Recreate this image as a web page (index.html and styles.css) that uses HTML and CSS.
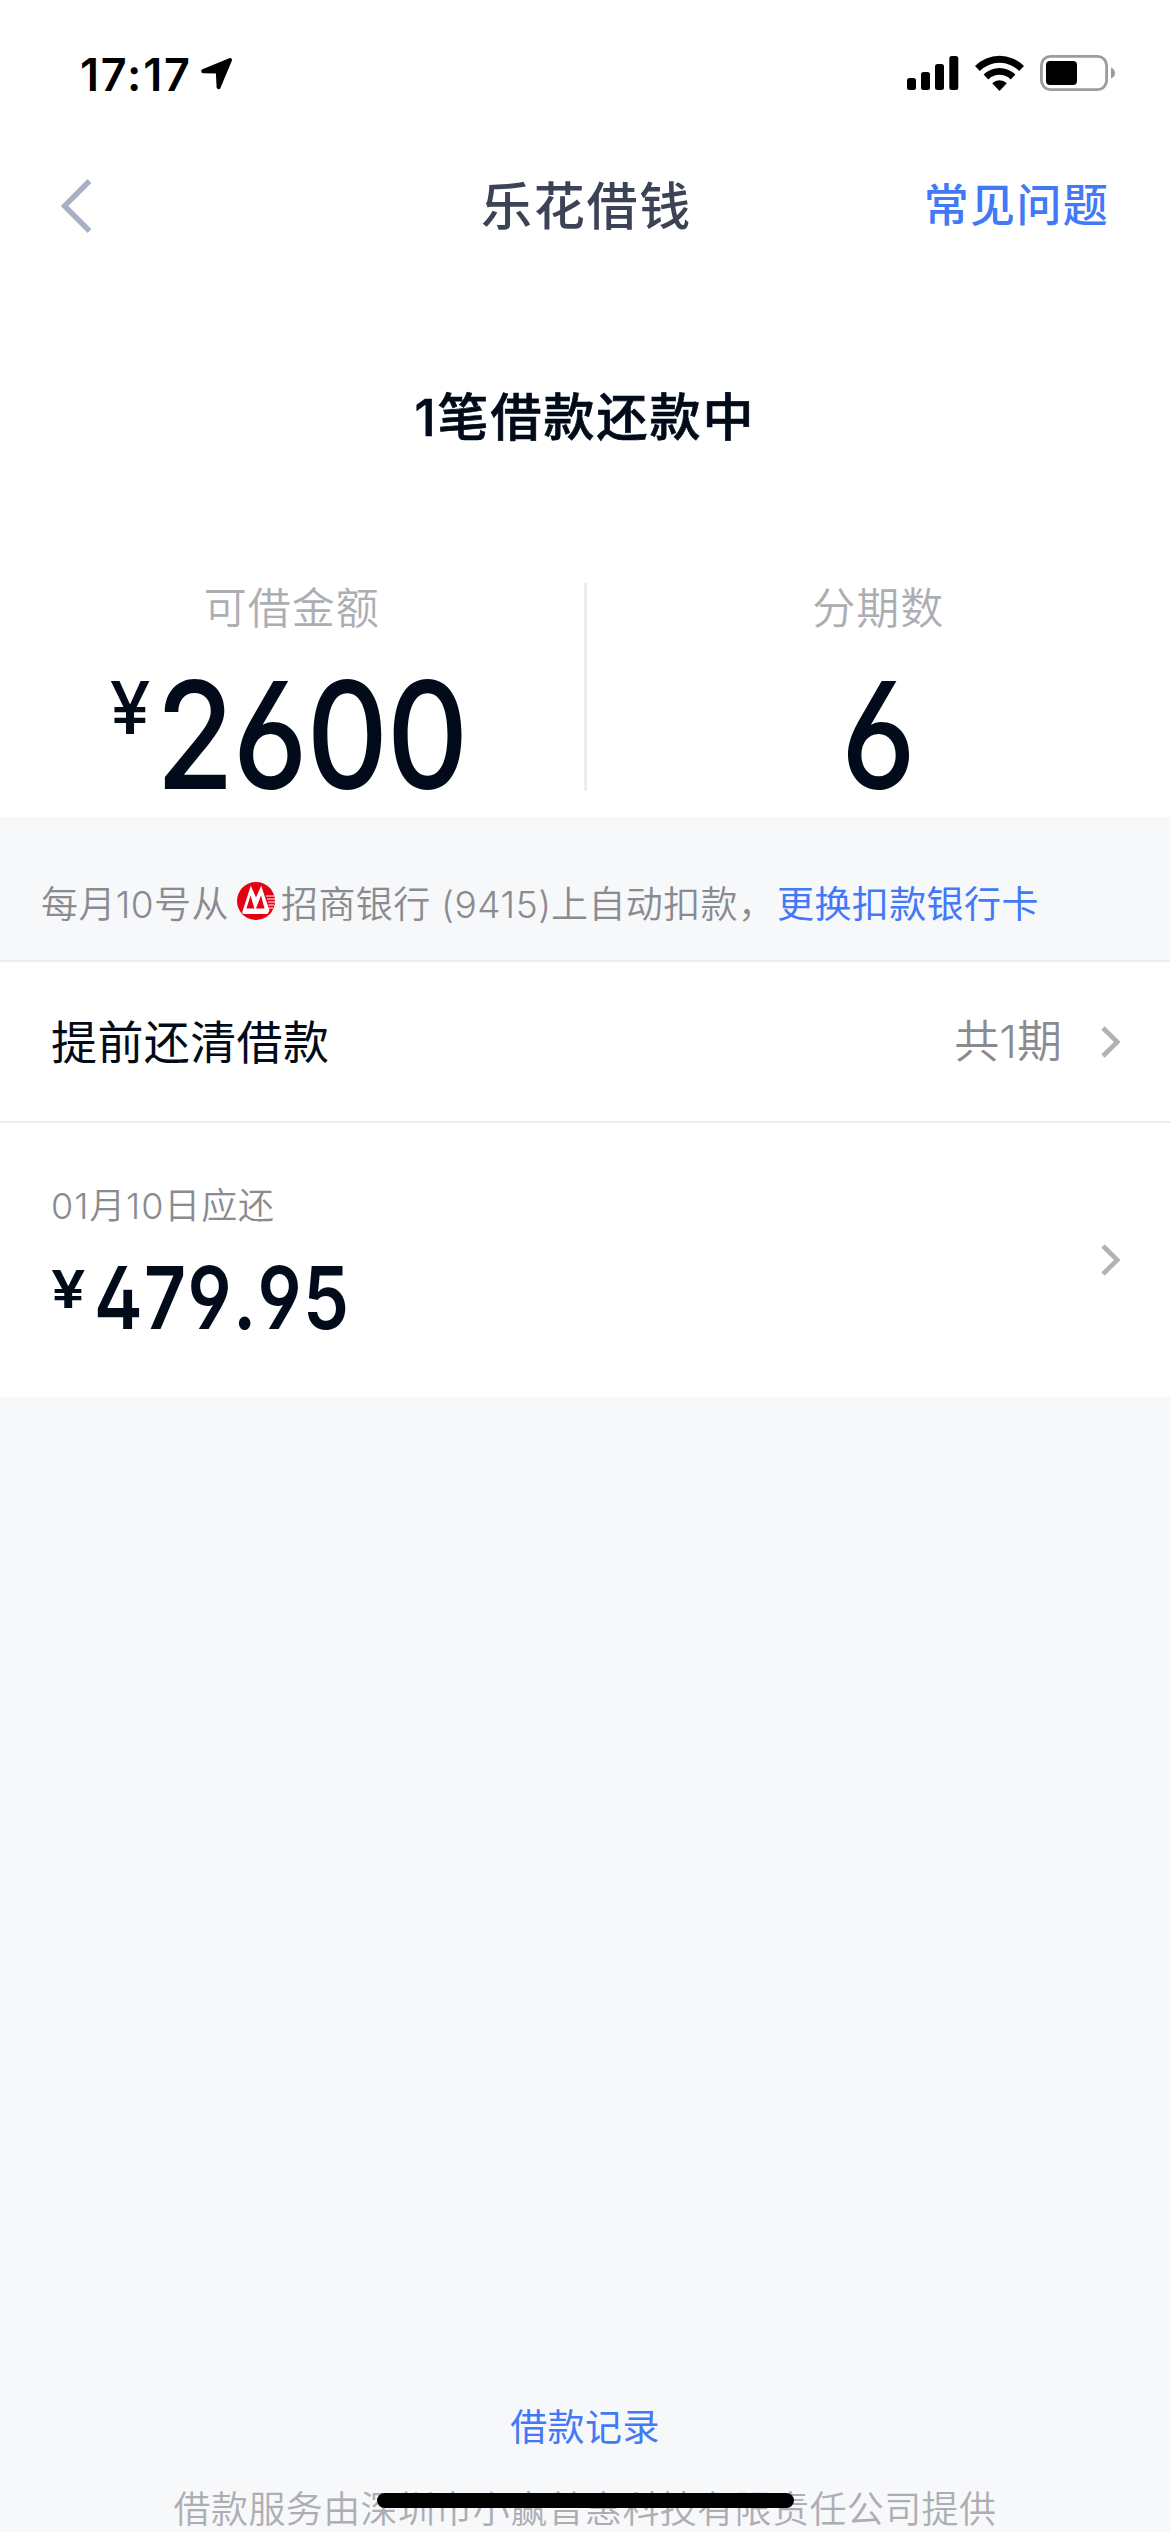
FILE: index.html
```html
<!DOCTYPE html>
<html lang="zh-CN">
<head>
<meta charset="utf-8">
<title>乐花借钱</title>
<link rel="stylesheet" href="styles.css">
</head>
<body>
<div class="page">
  <header class="status">
    <div class="status-left">
      <span class="time">17:17</span>
      <svg class="locate" width="34" height="34" viewBox="0 0 34 34"><path d="M3.2 14.2 30 3 18.6 30.2 17.8 14.6Z" stroke="#000" stroke-width="4" stroke-linejoin="round"/></svg>
    </div>
    <div class="status-right">
      <svg width="52" height="36" viewBox="0 0 52 36"><rect x="0" y="23" width="9" height="12" rx="2.5"/><rect x="14" y="17" width="9" height="18" rx="2.5"/><rect x="28" y="9" width="9" height="26" rx="2.5"/><rect x="42.3" y="1" width="9" height="34" rx="2.5"/></svg>
      <svg width="49" height="36" viewBox="0 0 49 36"><path d="M0 11A34.5 34.5 0 0 1 49 11L44.2 16A27.8 27.8 0 0 0 4.8 16Z"/><path d="M8.6 19.5A22.6 22.6 0 0 1 40.4 19.5L35.7 24.5A15.8 15.8 0 0 0 13.3 24.5Z"/><path d="M17.2 28.3A10.5 10.5 0 0 1 31.8 28.3L24.5 36Z"/></svg>
      <svg width="76" height="37" viewBox="0 0 76 37"><rect x="1.4" y="1.4" width="65.2" height="33.2" rx="9" fill="none" stroke="#9c9c9c" stroke-width="2.8"/><rect x="6" y="6" width="31" height="24" rx="4"/><path d="M71 12.5Q75 14 75 18T71 23.500Z" fill="#9c9c9c"/></svg>
    </div>
  </header>

  <nav class="nav">
    <svg class="back" width="32" height="54" viewBox="0 0 32 54"><path d="M28.500 2 3.500 27 28.500 52" fill="none" stroke="#a8b0c3" stroke-width="5.400"/></svg>
    <h1 class="title">乐花借钱</h1>
    <a class="faq">常见问题</a>
  </nav>

  <h2 class="headline">1笔借款还款中</h2>

  <section class="summary">
    <div class="stat">
      <div class="stat-label">可借金额</div>
      <div class="stat-value"><span class="yen">¥</span><span class="din">2600</span></div>
    </div>
    <div class="rule"></div>
    <div class="stat">
      <div class="stat-label">分期数</div>
      <div class="stat-value single"><span class="din">6</span></div>
    </div>
  </section>

  <section class="notice">
    <span class="notice-day">每月10号从</span>
    <svg class="bank" width="38" height="38" viewBox="0 0 38 38"><circle cx="19" cy="19" r="19" fill="#e50012"/><path d="M5 31 13.800 3.800 19 15.500 24.200 3.800 32.500 28.500 30.500 32H7ZM9.400 26.500H17.400L13.600 13.500ZM19 26.500H27.500L24 13.500Z" fill="#fff" fill-rule="evenodd"/><path d="M29 14H37M30 17H38M31 20H38M31.500 23H37M32 26H36" stroke="#fff" stroke-width="1"/></svg>
    <span class="notice-bank">招商银行</span>
    <span class="notice-num">(9415)</span>
    <span class="notice-tail">上自动扣款，</span>
    <a class="link">更换扣款银行卡</a>
  </section>

  <section class="row payoff">
    <span class="row-title">提前还清借款</span>
    <span class="row-count">共1期</span>
    <svg class="chev" width="20" height="32" viewBox="0 0 20 32"><path d="M2 2 16.300 16 2 30" fill="none" stroke="#b1b2b6" stroke-width="4.600"/></svg>
  </section>

  <section class="row due">
    <div class="due-main">
      <div class="due-date">01月10日应还</div>
      <div class="due-amount"><span class="due-yen">¥</span><span class="due-num">479.95</span></div>
    </div>
    <svg class="chev" width="20" height="32" viewBox="0 0 20 32"><path d="M2 2 16.300 16 2 30" fill="none" stroke="#b1b2b6" stroke-width="4.600"/></svg>
  </section>

  <footer class="footer">
    <a class="records">借款记录</a>
    <p class="provider">借款服务由深圳市小赢普惠科技有限责任公司提供</p>
  </footer>
  <div class="home-bar"></div>
</div>
</body>
</html>
```
FILE: styles.css
```css
* { box-sizing: border-box; margin: 0; padding: 0; }
body {
  width: 1170px;
  height: 2532px;
  overflow: hidden;
  background: #f7f8fa;
  color: #020b1a;
  font-family: "Inter", "Noto Sans CJK SC", sans-serif;
}
.page {
  position: relative;
  width: 1170px;
  height: 2532px;
  overflow: hidden;
  display: flex;
  flex-direction: column;
}
svg { display: block; flex: none; }
a, span { white-space: nowrap; }

.status {
  height: 150px;
  padding: 55px 54px 0 80px;
  background: #fff;
  color: #000;
  display: flex;
  justify-content: space-between;
  align-items: flex-start;
}
.status-left { display: flex; gap: 11px; }
.time {
  width: 109px;
  font-size: 45px;
  line-height: 40px;
  font-weight: 600;
  letter-spacing: 1.8px;
}
.locate { margin-top: 2px; }
.status-right { display: flex; gap: 16px; }

.nav {
  height: 111px;
  padding: 0 61px 0 61px;
  background: #fff;
  display: grid;
  grid-template-columns: 1fr auto 1fr;
  align-items: center;
}
.title {
  margin-top: 2px;
  padding-left: 3px;
  font-size: 51px;
  line-height: 72px;
  font-weight: 500;
  letter-spacing: 1.8px;
  color: #3c4354;
}
.faq {
  justify-self: end;
  font-size: 45px;
  line-height: 64px;
  font-weight: 500;
  letter-spacing: 1.3px;
  color: #4279f6;
}

.headline {
  height: 322px;
  padding-top: 121px;
  background: #fff;
  text-align: center;
  font-size: 51px;
  line-height: 72px;
  font-weight: 500;
  letter-spacing: 2px;
  -webkit-text-stroke: 0.7px #020b1a;
}

.summary {
  height: 234px;
  background: #fff;
  display: flex;
}
.rule { width: 3px; height: 208px; background: #ecedef; }
.stat { flex: 1; display: flex; flex-direction: column; align-items: center; }
.stat-label {
  font-size: 43px;
  line-height: 50px;
  font-weight: 350;
  letter-spacing: 1px;
  color: #adaeb3;
}
.stat-value {
  width: 400px;
  margin-top: 48px;
  padding-left: 18px;
  display: flex;
  line-height: 108px;
}
.din {
  flex: none;
  font-size: 149px;
  font-weight: 500;
  letter-spacing: -1.6px;
  font-feature-settings: "ss01";
  transform: scaleX(0.85);
  transform-origin: 0 50%;
}
.yen {
  flex: none;
  width: 46px;
  font-size: 73px;
  line-height: 54px;
  font-weight: 500;
}
.single { padding-left: 163px; }

.notice {
  height: 145px;
  padding: 68px 0 0 41px;
  border-bottom: 2px solid #ebecee;
  display: flex;
  font-size: 37px;
  line-height: 40px;
  font-weight: 350;
  color: #8a8b90;
  letter-spacing: 0.4px;
}
.notice-day { width: 196px; }
.bank { margin-top: -3px; }
.notice-bank { width: 160px; margin-left: 6px; }
.notice-num { width: 110px; letter-spacing: 0.6px; }
.notice-tail { width: 226px; }
.link { font-weight: 400; color: #4279f6; }

.row {
  padding: 0 49px 0 51px;
  background: #fff;
  display: flex;
  align-items: center;
}
.payoff { height: 161px; border-bottom: 2px solid #ebecee; }
.row-title { flex: 1; font-size: 46px; line-height: 64px; letter-spacing: 0.4px; }
.row-count {
  margin-right: 39px;
  font-size: 45px;
  line-height: 64px;
  font-weight: 350;
  color: #8a8b90;
}
.due { height: 274px; }
.due-main { flex: 1; height: 274px; padding-top: 61px; }
.due-date {
  font-size: 36px;
  line-height: 44px;
  font-weight: 350;
  letter-spacing: 0.9px;
  color: #8a8b90;
}
.due-amount { margin-top: 38px; display: flex; line-height: 63px; }
.due-yen {
  width: 43px;
  font-size: 52px;
  line-height: 48px;
  font-weight: 600;
  transform: scaleX(1.18);
  transform-origin: 0 50%;
}
.due-num {
  font-size: 87px;
  font-weight: 600;
  font-kerning: none;
  letter-spacing: 1.6px;
  font-feature-settings: "ss01";
  transform: scaleX(0.84);
  transform-origin: 0 50%;
}

.footer {
  flex: 1;
  padding-bottom: 2px;
  display: flex;
  flex-direction: column;
  justify-content: flex-end;
  align-items: center;
  font-size: 37px;
  line-height: 41px;
  letter-spacing: 0.4px;
}
.records { color: #4279f6; }
.provider { margin-top: 41px; font-weight: 350; color: #adaeb3; white-space: nowrap; }
.home-bar {
  position: absolute;
  left: 377px;
  top: 2493px;
  width: 417px;
  height: 15px;
  border-radius: 8px;
  background: #000;
}
```
